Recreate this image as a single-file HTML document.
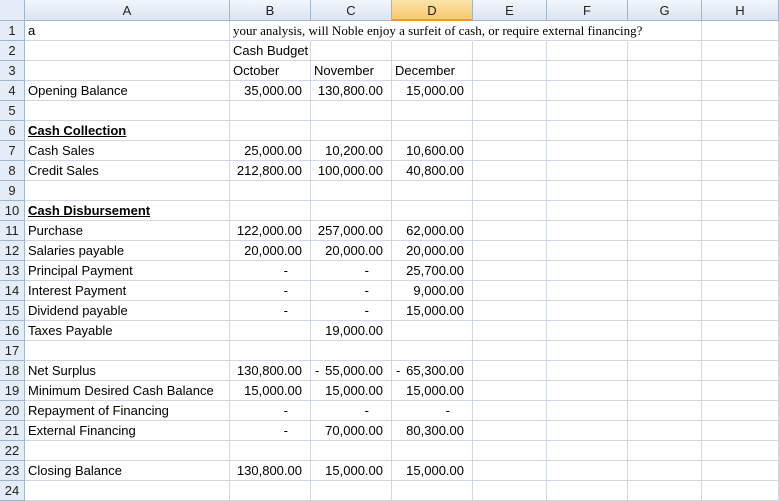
<!DOCTYPE html>
<html><head><style>
body{margin:0;width:779px;height:483px;overflow:hidden;background:#fff;font-family:"Liberation Sans",sans-serif;font-size:13px;color:#000}
.r{display:flex;height:20px}
.r>div{box-sizing:border-box;height:20px;border-right:1px solid #d0d7e5;border-bottom:1px solid #d0d7e5;line-height:20px;white-space:nowrap;overflow:visible;padding:0 3px}
.r>div:nth-child(1){width:25px;background:#e4ecf7;border-right:1px solid #9eb6ce;border-bottom:1px solid #9eb6ce;text-align:center;padding:0;color:#222}
.w2{width:205px}.w3,.w4,.w5,.w7{width:81px}.w6,.w8{width:74px}.w9{width:77px}
.n{text-align:right;padding-right:8px!important}
.d{text-align:right;padding-right:22px!important}
.h{height:21px!important}
.h>div{height:21px!important;background:linear-gradient(#f2f6fb,#dbe5f1)!important;border-right:1px solid #9eb6ce!important;border-bottom:1px solid #9eb6ce!important;text-align:center;line-height:21px;color:#222}
.h>div.sel{background:linear-gradient(#fbe3a8,#f8c96f)!important;border-bottom:2px solid #f29436!important}
b{text-decoration:underline}
.s{font-family:"Liberation Serif",serif;font-size:13px}
.nb{border-right-color:transparent!important}
.neg{display:flex;justify-content:space-between;padding-left:4px!important}
</style></head><body>
<div class="r h"><div style="background:#e4ecf7!important"></div><div class="w2">A</div><div class="w3">B</div><div class="w4">C</div><div class="w5 sel">D</div><div class="w6">E</div><div class="w7">F</div><div class="w8">G</div><div class="w9">H</div></div>
<div class="r"><div>1</div><div class="w2">a</div><div class="w3 s nb">your analysis, will Noble enjoy a surfeit of cash, or require external financing?</div><div class="w4 nb"></div><div class="w5 nb"></div><div class="w6 nb"></div><div class="w7 nb"></div><div class="w8"></div><div class="w9"></div></div>
<div class="r"><div>2</div><div class="w2"></div><div class="w3">Cash Budget</div><div class="w4"></div><div class="w5"></div><div class="w6"></div><div class="w7"></div><div class="w8"></div><div class="w9"></div></div>
<div class="r"><div>3</div><div class="w2"></div><div class="w3">October</div><div class="w4">November</div><div class="w5">December</div><div class="w6"></div><div class="w7"></div><div class="w8"></div><div class="w9"></div></div>
<div class="r"><div>4</div><div class="w2">Opening Balance</div><div class="w3 n">35,000.00</div><div class="w4 n">130,800.00</div><div class="w5 n">15,000.00</div><div class="w6"></div><div class="w7"></div><div class="w8"></div><div class="w9"></div></div>
<div class="r"><div>5</div><div class="w2"></div><div class="w3"></div><div class="w4"></div><div class="w5"></div><div class="w6"></div><div class="w7"></div><div class="w8"></div><div class="w9"></div></div>
<div class="r"><div>6</div><div class="w2"><b>Cash Collection</b></div><div class="w3"></div><div class="w4"></div><div class="w5"></div><div class="w6"></div><div class="w7"></div><div class="w8"></div><div class="w9"></div></div>
<div class="r"><div>7</div><div class="w2">Cash Sales</div><div class="w3 n">25,000.00</div><div class="w4 n">10,200.00</div><div class="w5 n">10,600.00</div><div class="w6"></div><div class="w7"></div><div class="w8"></div><div class="w9"></div></div>
<div class="r"><div>8</div><div class="w2">Credit Sales</div><div class="w3 n">212,800.00</div><div class="w4 n">100,000.00</div><div class="w5 n">40,800.00</div><div class="w6"></div><div class="w7"></div><div class="w8"></div><div class="w9"></div></div>
<div class="r"><div>9</div><div class="w2"></div><div class="w3"></div><div class="w4"></div><div class="w5"></div><div class="w6"></div><div class="w7"></div><div class="w8"></div><div class="w9"></div></div>
<div class="r"><div>10</div><div class="w2"><b>Cash Disbursement</b></div><div class="w3"></div><div class="w4"></div><div class="w5"></div><div class="w6"></div><div class="w7"></div><div class="w8"></div><div class="w9"></div></div>
<div class="r"><div>11</div><div class="w2">Purchase</div><div class="w3 n">122,000.00</div><div class="w4 n">257,000.00</div><div class="w5 n">62,000.00</div><div class="w6"></div><div class="w7"></div><div class="w8"></div><div class="w9"></div></div>
<div class="r"><div>12</div><div class="w2">Salaries payable</div><div class="w3 n">20,000.00</div><div class="w4 n">20,000.00</div><div class="w5 n">20,000.00</div><div class="w6"></div><div class="w7"></div><div class="w8"></div><div class="w9"></div></div>
<div class="r"><div>13</div><div class="w2">Principal Payment</div><div class="w3 d">-</div><div class="w4 d">-</div><div class="w5 n">25,700.00</div><div class="w6"></div><div class="w7"></div><div class="w8"></div><div class="w9"></div></div>
<div class="r"><div>14</div><div class="w2">Interest Payment</div><div class="w3 d">-</div><div class="w4 d">-</div><div class="w5 n">9,000.00</div><div class="w6"></div><div class="w7"></div><div class="w8"></div><div class="w9"></div></div>
<div class="r"><div>15</div><div class="w2">Dividend payable</div><div class="w3 d">-</div><div class="w4 d">-</div><div class="w5 n">15,000.00</div><div class="w6"></div><div class="w7"></div><div class="w8"></div><div class="w9"></div></div>
<div class="r"><div>16</div><div class="w2">Taxes Payable</div><div class="w3"></div><div class="w4 n">19,000.00</div><div class="w5"></div><div class="w6"></div><div class="w7"></div><div class="w8"></div><div class="w9"></div></div>
<div class="r"><div>17</div><div class="w2"></div><div class="w3"></div><div class="w4"></div><div class="w5"></div><div class="w6"></div><div class="w7"></div><div class="w8"></div><div class="w9"></div></div>
<div class="r"><div>18</div><div class="w2">Net Surplus</div><div class="w3 n">130,800.00</div><div class="w4 n neg"><span>-</span><span>55,000.00</span></div><div class="w5 n neg"><span>-</span><span>65,300.00</span></div><div class="w6"></div><div class="w7"></div><div class="w8"></div><div class="w9"></div></div>
<div class="r"><div>19</div><div class="w2">Minimum Desired Cash Balance</div><div class="w3 n">15,000.00</div><div class="w4 n">15,000.00</div><div class="w5 n">15,000.00</div><div class="w6"></div><div class="w7"></div><div class="w8"></div><div class="w9"></div></div>
<div class="r"><div>20</div><div class="w2">Repayment of Financing</div><div class="w3 d">-</div><div class="w4 d">-</div><div class="w5 d">-</div><div class="w6"></div><div class="w7"></div><div class="w8"></div><div class="w9"></div></div>
<div class="r"><div>21</div><div class="w2">External Financing</div><div class="w3 d">-</div><div class="w4 n">70,000.00</div><div class="w5 n">80,300.00</div><div class="w6"></div><div class="w7"></div><div class="w8"></div><div class="w9"></div></div>
<div class="r"><div>22</div><div class="w2"></div><div class="w3"></div><div class="w4"></div><div class="w5"></div><div class="w6"></div><div class="w7"></div><div class="w8"></div><div class="w9"></div></div>
<div class="r"><div>23</div><div class="w2">Closing Balance</div><div class="w3 n">130,800.00</div><div class="w4 n">15,000.00</div><div class="w5 n">15,000.00</div><div class="w6"></div><div class="w7"></div><div class="w8"></div><div class="w9"></div></div>
<div class="r"><div>24</div><div class="w2"></div><div class="w3"></div><div class="w4"></div><div class="w5"></div><div class="w6"></div><div class="w7"></div><div class="w8"></div><div class="w9"></div></div>
</body></html>
